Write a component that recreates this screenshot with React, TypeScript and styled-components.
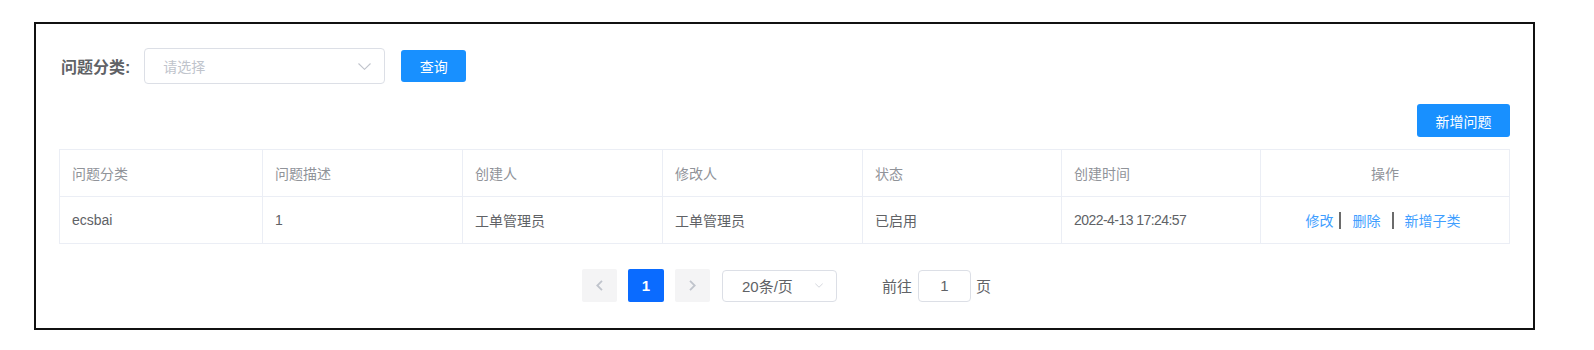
import React from "react";
import styled, { createGlobalStyle } from "styled-components";

const GlobalStyle = createGlobalStyle`
  html, body { margin: 0; padding: 0; background: #fff; }
  body { font-family: "Liberation Sans", "Noto Sans CJK SC", sans-serif; }
  * { box-sizing: border-box; }
`;

const Frame = styled.div`
  width: 1501px;
  margin: 22px 0 0 34px;
  border: 2px solid #111;
  padding: 24px 23px 26px 23px;
  background: #fff;
`;

const SearchRow = styled.div`
  display: flex;
  align-items: center;
  height: 36px;
  padding-left: 2px;
`;

const Label = styled.span`
  font-size: 16px;
  font-weight: 700;
  color: #606266;
  margin-right: 14px;
  white-space: nowrap;
`;

const SelectBox = styled.div<{ $w: number; $h: number; $pl: number }>`
  width: ${(p) => p.$w}px;
  height: ${(p) => p.$h}px;
  border: 1px solid #dcdfe6;
  border-radius: 4px;
  display: flex;
  align-items: center;
  justify-content: space-between;
  padding-left: ${(p) => p.$pl}px;
  padding-right: 13px;
  background: #fff;
`;

const Placeholder = styled.span`
  font-size: 14px;
  color: #c0c4cc;
`;

const SizeText = styled.span`
  font-size: 15px;
  color: #606266;
`;

const PrimaryButton = styled.button<{ $w: number; $h: number }>`
  width: ${(p) => p.$w}px;
  height: ${(p) => p.$h}px;
  border: none;
  border-radius: 3px;
  background: #1890ff;
  color: #fff;
  font-family: inherit;
  font-size: 14px;
  padding: 0;
  display: flex;
  align-items: center;
  justify-content: center;
  cursor: pointer;
`;

const QueryButton = styled(PrimaryButton)`
  margin-left: 16px;
`;

const ActionRow = styled.div`
  display: flex;
  justify-content: flex-end;
  margin-top: 20px;
`;

const Table = styled.table`
  width: 100%;
  margin-top: 12px;
  border-collapse: collapse;
  table-layout: fixed;
  border: 1px solid #ebeef5;
`;

const Th = styled.th<{ $center?: boolean }>`
  height: 47px;
  padding: 0 12px;
  border: 1px solid #ebeef5;
  font-size: 14px;
  font-weight: 400;
  color: #909399;
  text-align: ${(p) => (p.$center ? "center" : "left")};
  background: #fff;
`;

const Td = styled.td<{ $center?: boolean }>`
  height: 47px;
  padding: 0 12px;
  border: 1px solid #ebeef5;
  font-size: 14px;
  color: #606266;
  text-align: ${(p) => (p.$center ? "center" : "left")};
  white-space: nowrap;
`;

const DateText = styled.span`
  font-size: 14px;
  letter-spacing: -0.55px;
`;

const Ops = styled.div`
  display: flex;
  align-items: center;
  justify-content: center;
  padding-right: 4px;
`;

const OpLink = styled.a`
  font-size: 14px;
  color: #409eff;
  cursor: pointer;
  text-decoration: none;
`;

const Sep = styled.span<{ $ml: number; $mr: number }>`
  display: inline-block;
  width: 2px;
  height: 17px;
  background: #6b6b6b;
  margin-left: ${(p) => p.$ml}px;
  margin-right: ${(p) => p.$mr}px;
`;

const Pagination = styled.div`
  display: flex;
  align-items: center;
  justify-content: center;
  margin-top: 25px;
  height: 33px;
  padding-left: 4px;
`;

const PageBtn = styled.div<{ $active?: boolean; $w: number; $ml?: number }>`
  width: ${(p) => p.$w}px;
  height: 33px;
  margin-left: ${(p) => p.$ml ?? 0}px;
  border-radius: 2px;
  background: ${(p) => (p.$active ? "#0a6bff" : "#f4f4f5")};
  color: ${(p) => (p.$active ? "#fff" : "#c0c4cc")};
  font-size: 15px;
  font-weight: 700;
  display: flex;
  align-items: center;
  justify-content: center;
`;

const SizeWrap = styled.div`
  margin-left: 12px;
`;

const Jumper = styled.div`
  display: flex;
  align-items: center;
  margin-left: 45px;
  font-size: 15px;
  color: #606266;
`;

const JumpInput = styled.div`
  width: 53px;
  height: 32px;
  margin: 0 5px 0 6px;
  border: 1px solid #dcdfe6;
  border-radius: 4px;
  display: flex;
  align-items: center;
  justify-content: center;
  font-size: 15px;
  color: #606266;
`;

const ChevronDown = ({ w, h }: { w: number; h: number }) => (
  <svg width={w} height={h} viewBox="0 0 13 7" fill="none">
    <polyline points="0.5,0.5 6.5,6.3 12.5,0.5" stroke="#c0c4cc" strokeWidth="1.1" />
  </svg>
);

const ChevronSide = ({ dir }: { dir: "left" | "right" }) => (
  <svg width="7" height="11" viewBox="0 0 7 11" fill="none">
    <polyline
      points={dir === "left" ? "6,0.8 1.3,5.5 6,10.2" : "1,0.8 5.7,5.5 1,10.2"}
      stroke="#c0c4cc"
      strokeWidth="1.8"
    />
  </svg>
);

const columns = [
  { title: "问题分类", width: 203 },
  { title: "问题描述", width: 200 },
  { title: "创建人", width: 200 },
  { title: "修改人", width: 200 },
  { title: "状态", width: 199 },
  { title: "创建时间", width: 199 },
];

export default function App() {
  return (
    <>
      <GlobalStyle />
      <Frame>
        <SearchRow>
          <Label>问题分类:</Label>
          <SelectBox $w={241} $h={36} $pl={18}>
            <Placeholder>请选择</Placeholder>
            <ChevronDown w={13} h={7} />
          </SelectBox>
          <QueryButton $w={65} $h={32}>查询</QueryButton>
        </SearchRow>
        <ActionRow>
          <PrimaryButton $w={93} $h={33}>新增问题</PrimaryButton>
        </ActionRow>
        <Table>
          <colgroup>
            {columns.map((c) => (
              <col key={c.title} style={{ width: c.width }} />
            ))}
            <col />
          </colgroup>
          <thead>
            <tr>
              {columns.map((c) => (
                <Th key={c.title}>{c.title}</Th>
              ))}
              <Th $center>操作</Th>
            </tr>
          </thead>
          <tbody>
            <tr>
              <Td>ecsbai</Td>
              <Td>1</Td>
              <Td>工单管理员</Td>
              <Td>工单管理员</Td>
              <Td>已启用</Td>
              <Td>
                <DateText>2022-4-13 17:24:57</DateText>
              </Td>
              <Td $center>
                <Ops>
                  <OpLink>修改</OpLink>
                  <Sep $ml={5} $mr={12} />
                  <OpLink>删除</OpLink>
                  <Sep $ml={11} $mr={11} />
                  <OpLink>新增子类</OpLink>
                </Ops>
              </Td>
            </tr>
          </tbody>
        </Table>
        <Pagination>
          <PageBtn $w={35}>
            <ChevronSide dir="left" />
          </PageBtn>
          <PageBtn $w={36} $ml={11} $active>
            1
          </PageBtn>
          <PageBtn $w={35} $ml={11}>
            <ChevronSide dir="right" />
          </PageBtn>
          <SizeWrap>
            <SelectBox $w={115} $h={32} $pl={19}>
              <SizeText>20条/页</SizeText>
              <ChevronDown w={8} h={5} />
            </SelectBox>
          </SizeWrap>
          <Jumper>
            前往
            <JumpInput>1</JumpInput>
            页
          </Jumper>
        </Pagination>
      </Frame>
    </>
  );
}
